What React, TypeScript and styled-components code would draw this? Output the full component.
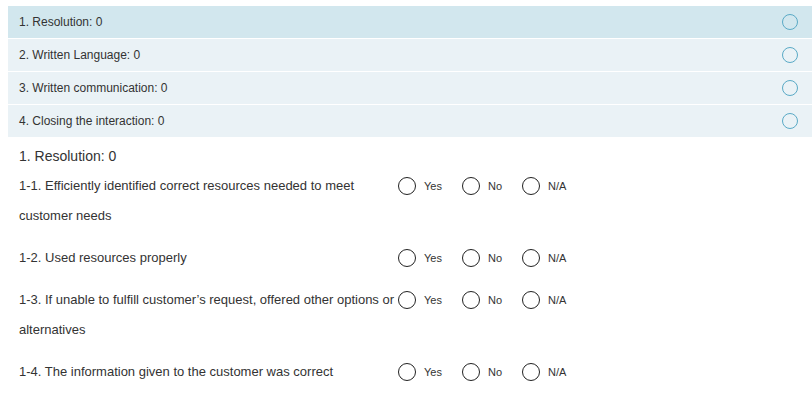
import React from 'react';
import styled, { createGlobalStyle } from 'styled-components';

const GlobalStyle = createGlobalStyle`
  body {
    margin: 0;
    background: #fff;
    font-family: 'Liberation Sans', Arial, sans-serif;
    color: #333;
  }
`;

const Page = styled.div`
  padding: 6px 0 0 8px;
`;

const SectionList = styled.div`
  display: flex;
  flex-direction: column;
  gap: 1px;
`;

const SectionRow = styled.div<{ active?: boolean }>`
  display: flex;
  align-items: center;
  justify-content: space-between;
  height: 32px;
  padding: 0 14px 0 11px;
  background: ${p => (p.active ? '#d2e7ee' : '#eaf2f6')};
  font-size: 12px;
  color: #333;
`;

const StatusCircle = styled.span`
  width: 14px;
  height: 14px;
  border: 1px solid #5aaac6;
  border-radius: 50%;
`;

const Body = styled.div`
  padding: 9px 0 0 11px;
`;

const SectionTitle = styled.div`
  font-size: 14px;
  line-height: 20px;
  margin-bottom: 5px;
`;

const Question = styled.div`
  display: flex;
  align-items: flex-start;
  margin-bottom: 12px;
`;

const QuestionText = styled.div`
  width: 379px;
  font-size: 13px;
  line-height: 30px;
`;

const Options = styled.div`
  display: flex;
  height: 30px;
  align-items: center;
`;

const Option = styled.label`
  display: flex;
  align-items: center;
  margin-right: 20px;
  font-size: 11px;
  color: #333;
`;

const Radio = styled.span`
  width: 16px;
  height: 16px;
  border: 1px solid #222;
  border-radius: 50%;
  margin-right: 8px;
`;

const sections = [
  '1. Resolution: 0',
  '2. Written Language: 0',
  '3. Written communication: 0',
  '4. Closing the interaction: 0'
];

const questions = [
  '1-1. Efficiently identified correct resources needed to meet customer needs',
  '1-2. Used resources properly',
  '1-3. If unable to fulfill customer\u2019s request, offered other options or alternatives',
  '1-4. The information given to the customer was correct'
];

const App: React.FunctionComponent = () => {
  return (
    <Page>
      <GlobalStyle />
      <SectionList>
        {sections.map((s, i) => (
          <SectionRow key={s} active={i === 0}>
            {s}
            <StatusCircle />
          </SectionRow>
        ))}
      </SectionList>
      <Body>
        <SectionTitle>1. Resolution: 0</SectionTitle>
        {questions.map(q => (
          <Question key={q}>
            <QuestionText>{q}</QuestionText>
            <Options>
              {['Yes', 'No', 'N/A'].map(o => (
                <Option key={o}>
                  <Radio />
                  {o}
                </Option>
              ))}
            </Options>
          </Question>
        ))}
      </Body>
    </Page>
  );
};

export default App;
